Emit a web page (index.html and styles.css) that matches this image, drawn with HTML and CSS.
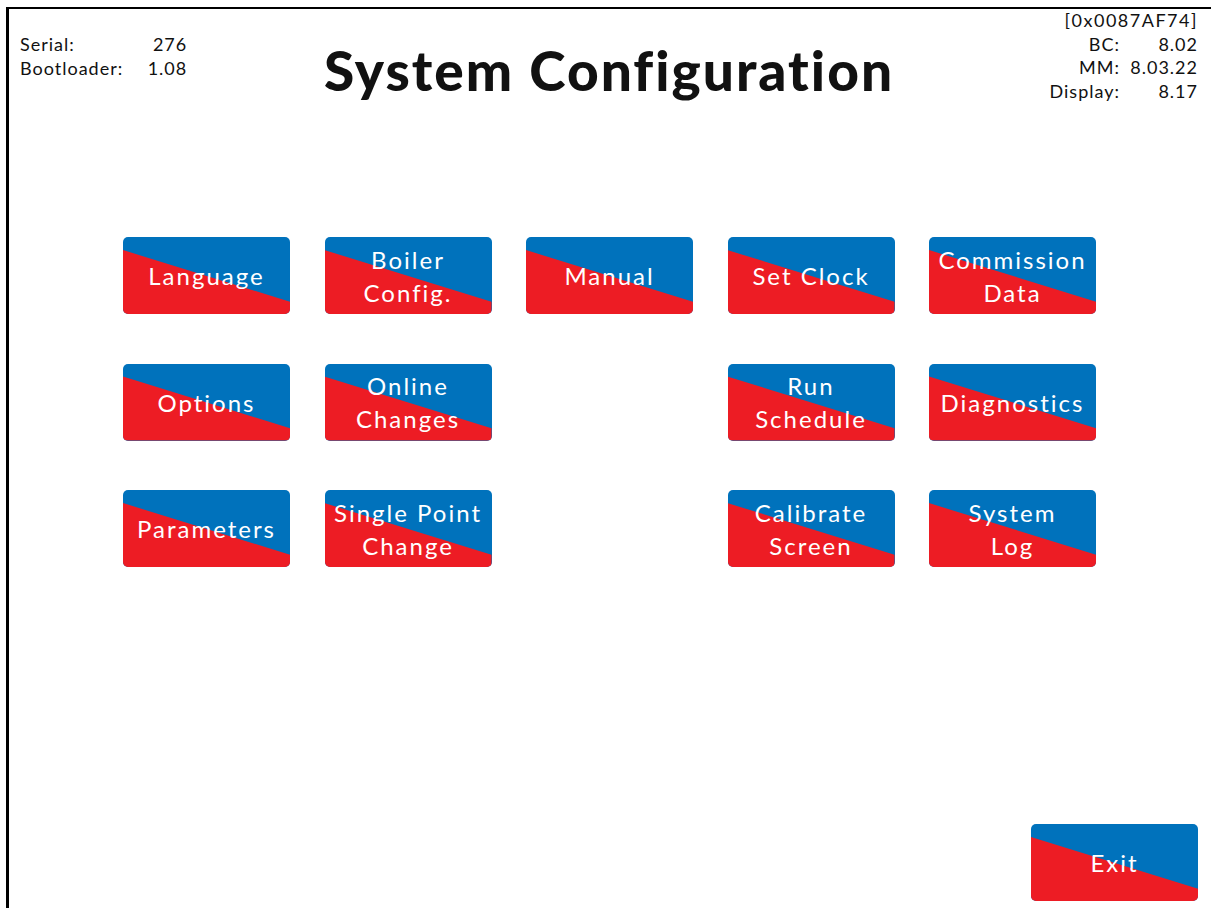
FILE: index.html
```html
<!DOCTYPE html>
<html lang="en">
<head>
  <meta charset="UTF-8" />
  <meta name="viewport" content="width=device-width, initial-scale=1.0" />
  <title>System Configuration</title>
  <link rel="stylesheet" href="styles.css">
</head>
<body>
  <div class="screen">
    <header class="top">
      <table class="info info-left">
        <tr><td>Serial:</td><td class="val">276</td></tr>
        <tr><td>Bootloader:</td><td class="val">1.08</td></tr>
      </table>
      <h1>System Configuration</h1>
      <div class="info info-right">
        <div>[0x0087AF74]</div>
        <table>
          <tr><td>BC:</td><td class="val">8.02</td></tr>
          <tr><td>MM:</td><td class="val">8.03.22</td></tr>
          <tr><td>Display:</td><td class="val">8.17</td></tr>
        </table>
      </div>
    </header>

    <main class="menu">
      <button class="btn"><span>Language</span></button>
      <button class="btn"><span>Boiler<br>Config.</span></button>
      <button class="btn"><span>Manual</span></button>
      <button class="btn"><span>Set Clock</span></button>
      <button class="btn"><span>Commission<br>Data</span></button>

      <button class="btn"><span>Options</span></button>
      <button class="btn"><span>Online<br>Changes</span></button>
      <div class="blank"></div>
      <button class="btn"><span>Run<br>Schedule</span></button>
      <button class="btn"><span>Diagnostics</span></button>

      <button class="btn"><span>Parameters</span></button>
      <button class="btn"><span>Single Point<br>Change</span></button>
      <div class="blank"></div>
      <button class="btn"><span>Calibrate<br>Screen</span></button>
      <button class="btn"><span>System<br>Log</span></button>
    </main>

    <footer class="bottom">
      <button class="btn"><span>Exit</span></button>
    </footer>
  </div>
</body>
</html>
```

FILE: styles.css
```css
body {
  margin: 0;
  background: #fff;
  font-family: Lato, "Noto Sans", sans-serif;
  color: #111;
}
.screen {
  margin: 7px 0 0 6px;
  height: 901px;
  box-sizing: border-box;
  border-top: 2px solid #000;
  border-left: 3px solid #000;
  display: flex;
  flex-direction: column;
  padding: 0 13px 7px 11px;
}
.top {
  display: grid;
  grid-template-columns: 1fr auto 1fr;
  align-items: start;
}
.info {
  font-size: 18px;
  letter-spacing: 1px;
}
.info td {
  padding: 0;
}
.info .val {
  text-align: right;
}
.info-left {
  justify-self: start;
  border-collapse: collapse;
  margin-top: 23px;
  line-height: 24px;
}
.info-left .val {
  padding-left: 10px;
  min-width: 54px;
}
.info-right {
  justify-self: end;
  text-align: right;
  line-height: 23.5px;
  letter-spacing: 1.5px;
  margin-top: 0;
}
.info-right table {
  border-collapse: collapse;
  margin-left: auto;
  letter-spacing: 1px;
}
.info-right .val {
  padding-left: 5px;
  min-width: 73px;
}
h1 {
  margin: 29px 0 0;
  font-size: 55px;
  font-weight: 900;
  letter-spacing: 2px;
  line-height: 64px;
}
.menu {
  margin: 134px 0 0 103px;
  display: grid;
  grid-template-columns: repeat(5, 167px);
  grid-auto-rows: 77px;
  column-gap: 34.5px;
  row-gap: 49.5px;
}
.btn {
  position: relative;
  width: 167px;
  height: 77px;
  padding: 0;
  border: none;
  border-radius: 5px;
  background: #0072bc;
  color: #fff;
  font-family: inherit;
  font-size: 24px;
  line-height: 33px;
  letter-spacing: 2px;
  overflow: hidden;
  cursor: pointer;
}
.btn::before {
  content: "";
  position: absolute;
  inset: 0;
  background: #ed1c24;
  clip-path: polygon(0 17%, 100% 84%, 100% 100%, 0 100%);
}
.btn span {
  position: relative;
}
.bottom {
  margin-top: auto;
  display: flex;
  justify-content: flex-end;
}
```
